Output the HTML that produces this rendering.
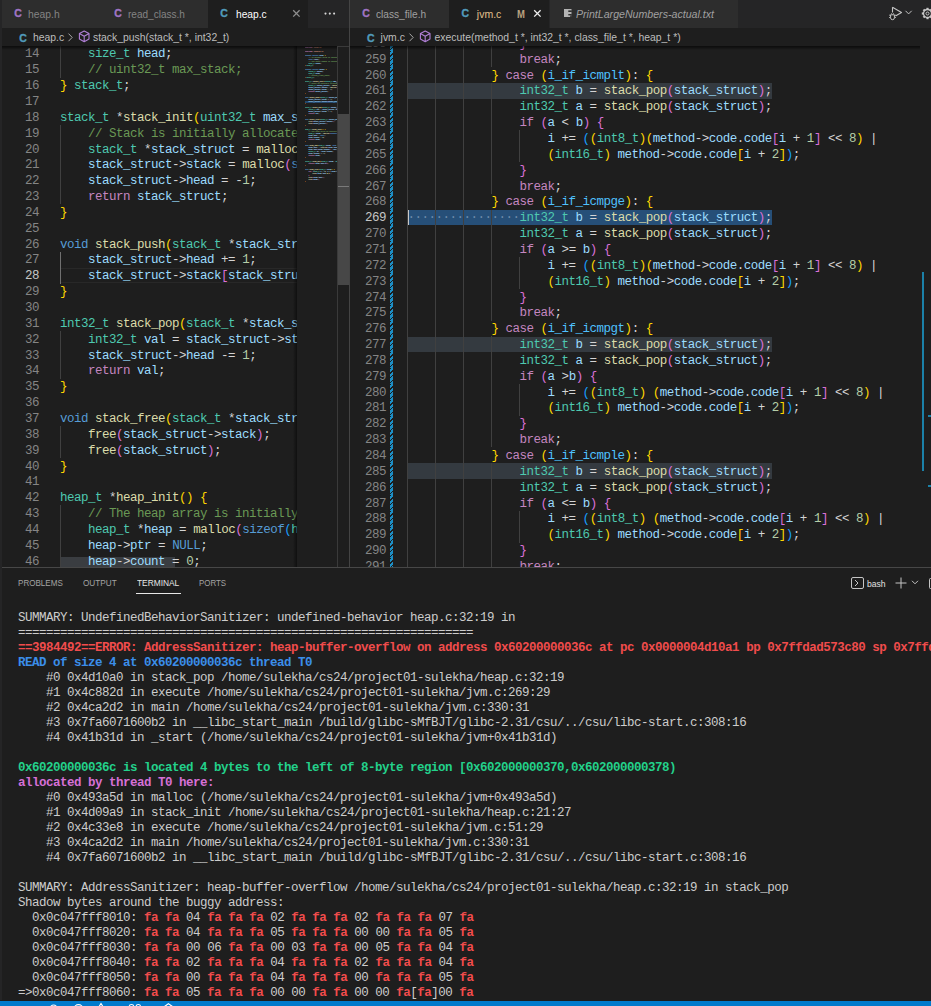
<!DOCTYPE html><html><head><meta charset="utf-8"><style>html,body{margin:0;padding:0;width:931px;height:1006px;overflow:hidden;background:#1e1e1e}
.abs{position:absolute}
.tabbar{background:#252526}
.tabt{font-family:"Liberation Sans",sans-serif;font-size:10.5px;line-height:14px;white-space:pre}
.bct{font-family:"Liberation Sans",sans-serif;font-size:10.4px;line-height:14px;color:#bdbdbd;white-space:pre}
.cic{font-family:"Liberation Sans",sans-serif;font-weight:bold;font-size:10.5px;line-height:10px;-webkit-text-stroke:0.35px currentColor}
.ln{font-family:"Liberation Mono",monospace;font-size:12.5px;letter-spacing:-0.5px;line-height:15.85px;text-align:right;white-space:pre}
.code{font-family:"Liberation Mono",monospace;font-size:12.5px;letter-spacing:-0.5px;line-height:15.85px;white-space:pre;overflow:hidden;color:#d4d4d4}
.term{font-family:"Liberation Mono",monospace;font-size:12.5px;letter-spacing:-0.5px;line-height:15px;white-space:pre;color:#cccccc}
.ptab{font-family:"Liberation Sans",sans-serif;font-size:9.6px;line-height:12px;white-space:pre}
.bash{font-family:"Liberation Sans",sans-serif;font-size:9.5px;line-height:12px;color:#e0e0e0}
.t{color:#4ec9b0}.v{color:#9cdcfe}.f{color:#dcdcaa}.k{color:#c586c0}.s{color:#569cd6}.c{color:#6a9955}.n{color:#b5cea8}.e{color:#4fc1ff}.p{color:#d4d4d4}
.gitm{background:repeating-linear-gradient(-45deg,#1d8fc6 0px,#1d8fc6 2.4px,#1e1e1e 2.4px,#1e1e1e 3.3px)}
.mini{font-family:"Liberation Mono",monospace;font-size:1.667px;line-height:2px;white-space:pre;color:#d4d4d4;overflow:hidden;-webkit-text-stroke:0.12px currentColor;opacity:0.85}
</style></head><body><div class="abs" style="left:0;top:0;width:2px;height:1000px;background:#252526;z-index:5"></div><div class="abs tabbar" style="left:2px;top:0;width:347px;height:28px"></div><div class="abs" style="left:2.0px;top:0;width:99.8px;height:28px;background:#2d2d2d"></div><div class="abs cic" style="left:14.2px;top:7.7px;color:#a074c4">C</div><div class="abs tabt" style="left:28.1px;top:7px;color:#848484;transform:scaleX(0.985);transform-origin:0 0">heap.h</div><div class="abs" style="left:102.0px;top:0;width:106.0px;height:28px;background:#2d2d2d"></div><div class="abs cic" style="left:114.2px;top:7.7px;color:#a074c4">C</div><div class="abs tabt" style="left:128.3px;top:7px;color:#848484;transform:scaleX(0.956);transform-origin:0 0">read_class.h</div><div class="abs" style="left:208.0px;top:0;width:100.0px;height:28px;background:#1e1e1e"></div><div class="abs cic" style="left:220.2px;top:7.7px;color:#519aba">C</div><div class="abs tabt" style="left:236.1px;top:7px;color:#ffffff;transform:scaleX(0.972);transform-origin:0 0">heap.c</div><svg class="abs" style="left:291.5px;top:9.3px" width="9" height="9" viewBox="0 0 9 9"><path d="M1.2 1.2L7.6 7.6M7.6 1.2L1.2 7.6" stroke="#8e8e8e" stroke-width="1.3"/></svg><svg class="abs" style="left:320px;top:8px" width="20" height="12" viewBox="0 0 20 12"><circle cx="5.5" cy="5.6" r="1.05" fill="#d8d8d8"/><circle cx="9.8" cy="5.6" r="1.05" fill="#d8d8d8"/><circle cx="14.1" cy="5.6" r="1.05" fill="#d8d8d8"/></svg><div class="abs" style="left:2px;top:28px;width:347px;height:18px;background:#1e1e1e"></div><div class="abs cic" style="left:19.3px;top:32.5px;color:#519aba">C</div><div class="abs bct" style="left:32.9px;top:31px">heap.c</div><svg class="abs" style="left:67.3px;top:33px" width="7" height="9" viewBox="0 0 7 9"><path d="M1.5 0.6L5.2 4.4L1.5 8.2" fill="none" stroke="#a8a8a8" stroke-width="1"/></svg><svg class="abs" style="left:77.5px;top:30.2px" width="13" height="13" viewBox="0 0 13 13"><path d="M6.2 1L11 3.6V9.1L6.2 11.7L1.4 9.1V3.6Z M1.4 3.6L6.2 6.3L11 3.6 M6.2 6.3V11.7" fill="none" stroke="#b180d7" stroke-width="1.1" stroke-linejoin="round"/></svg><div class="abs bct" style="left:93.0px;top:31px">stack_push(stack_t *, int32_t)</div><div class="abs" style="left:2px;top:46px;width:347px;height:521px;overflow:hidden;background:#1e1e1e"><div class="abs" style="left:58.0px;top:-0.30px;width:1px;height:16.05px;background:#404040"></div><div class="abs ln" style="left:0;top:1.40px;width:37.1px;color:#858585">14</div><div class="abs code" style="left:58.0px;top:1.40px;width:237px">    <span class="t">size_t</span> <span class="v">head</span><span class="p">;</span></div><div class="abs" style="left:58.0px;top:15.55px;width:1px;height:16.05px;background:#404040"></div><div class="abs ln" style="left:0;top:17.25px;width:37.1px;color:#858585">15</div><div class="abs code" style="left:58.0px;top:17.25px;width:237px">    <span class="c">// uint32_t max_stack;</span></div><div class="abs ln" style="left:0;top:33.10px;width:37.1px;color:#858585">16</div><div class="abs code" style="left:58.0px;top:33.10px;width:237px"><span style="color:#ffd700">}</span> <span class="t">stack_t</span><span class="p">;</span></div><div class="abs ln" style="left:0;top:48.95px;width:37.1px;color:#858585">17</div><div class="abs code" style="left:58.0px;top:48.95px;width:237px"></div><div class="abs ln" style="left:0;top:64.80px;width:37.1px;color:#858585">18</div><div class="abs code" style="left:58.0px;top:64.80px;width:237px"><span class="t">stack_t</span> <span class="p">*</span><span class="f">stack_init</span><span style="color:#ffd700">(</span><span class="t">uint32_t</span> <span class="v">max_stack</span><span style="color:#ffd700">)</span> <span style="color:#ffd700">{</span></div><div class="abs" style="left:58.0px;top:78.95px;width:1px;height:16.05px;background:#404040"></div><div class="abs ln" style="left:0;top:80.65px;width:37.1px;color:#858585">19</div><div class="abs code" style="left:58.0px;top:80.65px;width:237px">    <span class="c">// Stack is initially allocated with a fixed size</span></div><div class="abs" style="left:58.0px;top:94.80px;width:1px;height:16.05px;background:#404040"></div><div class="abs ln" style="left:0;top:96.50px;width:37.1px;color:#858585">20</div><div class="abs code" style="left:58.0px;top:96.50px;width:237px">    <span class="t">stack_t</span> <span class="p">*</span><span class="v">stack_struct</span> <span class="p">=</span> <span class="f">malloc</span><span style="color:#da70d6">(</span><span class="s">sizeof</span><span style="color:#179fff">(</span><span class="t">stack_t</span><span style="color:#179fff">)</span><span style="color:#da70d6">)</span><span class="p">;</span></div><div class="abs" style="left:58.0px;top:110.65px;width:1px;height:16.05px;background:#404040"></div><div class="abs ln" style="left:0;top:112.35px;width:37.1px;color:#858585">21</div><div class="abs code" style="left:58.0px;top:112.35px;width:237px">    <span class="v">stack_struct</span><span class="p">-</span><span class="p">&gt;</span><span class="v">stack</span> <span class="p">=</span> <span class="f">malloc</span><span style="color:#da70d6">(</span><span class="s">sizeof</span><span style="color:#179fff">(</span><span class="t">int32_t</span><span style="color:#179fff">)</span> <span class="p">*</span> <span class="v">max_stack</span><span style="color:#da70d6">)</span><span class="p">;</span></div><div class="abs" style="left:58.0px;top:126.50px;width:1px;height:16.05px;background:#404040"></div><div class="abs ln" style="left:0;top:128.20px;width:37.1px;color:#858585">22</div><div class="abs code" style="left:58.0px;top:128.20px;width:237px">    <span class="v">stack_struct</span><span class="p">-</span><span class="p">&gt;</span><span class="v">head</span> <span class="p">=</span> <span class="p">-</span><span class="n">1</span><span class="p">;</span></div><div class="abs" style="left:58.0px;top:142.35px;width:1px;height:16.05px;background:#404040"></div><div class="abs ln" style="left:0;top:144.05px;width:37.1px;color:#858585">23</div><div class="abs code" style="left:58.0px;top:144.05px;width:237px">    <span class="k">return</span> <span class="v">stack_struct</span><span class="p">;</span></div><div class="abs ln" style="left:0;top:159.90px;width:37.1px;color:#858585">24</div><div class="abs code" style="left:58.0px;top:159.90px;width:237px"><span style="color:#ffd700">}</span></div><div class="abs ln" style="left:0;top:175.75px;width:37.1px;color:#858585">25</div><div class="abs code" style="left:58.0px;top:175.75px;width:237px"></div><div class="abs ln" style="left:0;top:191.60px;width:37.1px;color:#858585">26</div><div class="abs code" style="left:58.0px;top:191.60px;width:237px"><span class="s">void</span> <span class="f">stack_push</span><span style="color:#ffd700">(</span><span class="t">stack_t</span> <span class="p">*</span><span class="v">stack_struct</span><span class="p">,</span> <span class="t">int32_t</span> <span class="v">value</span><span style="color:#ffd700">)</span> <span style="color:#ffd700">{</span></div><div class="abs" style="left:58.0px;top:205.75px;width:1px;height:16.05px;background:#707070"></div><div class="abs ln" style="left:0;top:207.45px;width:37.1px;color:#858585">27</div><div class="abs code" style="left:58.0px;top:207.45px;width:237px">    <span class="v">stack_struct</span><span class="p">-</span><span class="p">&gt;</span><span class="v">head</span> <span class="p">+</span><span class="p">=</span> <span class="n">1</span><span class="p">;</span></div><div class="abs" style="left:58.0px;top:221.60px;width:237px;height:15.85px;border-top:1px solid #282828;border-bottom:1px solid #282828;box-sizing:border-box"></div><div class="abs" style="left:58.0px;top:221.60px;width:1px;height:16.05px;background:#707070"></div><div class="abs ln" style="left:0;top:223.30px;width:37.1px;color:#c6c6c6">28</div><div class="abs code" style="left:58.0px;top:223.30px;width:237px">    <span class="v">stack_struct</span><span class="p">-</span><span class="p">&gt;</span><span class="v">stack</span><span style="color:#da70d6">[</span><span class="v">stack_struct</span><span class="p">-</span><span class="p">&gt;</span><span class="v">head</span><span style="color:#da70d6">]</span> <span class="p">=</span> <span class="v">value</span><span class="p">;</span></div><div class="abs ln" style="left:0;top:239.15px;width:37.1px;color:#858585">29</div><div class="abs code" style="left:58.0px;top:239.15px;width:237px"><span style="color:#ffd700">}</span></div><div class="abs ln" style="left:0;top:255.00px;width:37.1px;color:#858585">30</div><div class="abs code" style="left:58.0px;top:255.00px;width:237px"></div><div class="abs ln" style="left:0;top:270.85px;width:37.1px;color:#858585">31</div><div class="abs code" style="left:58.0px;top:270.85px;width:237px"><span class="t">int32_t</span> <span class="f">stack_pop</span><span style="color:#ffd700">(</span><span class="t">stack_t</span> <span class="p">*</span><span class="v">stack_struct</span><span style="color:#ffd700">)</span> <span style="color:#ffd700">{</span></div><div class="abs" style="left:58.0px;top:285.00px;width:1px;height:16.05px;background:#404040"></div><div class="abs ln" style="left:0;top:286.70px;width:37.1px;color:#858585">32</div><div class="abs code" style="left:58.0px;top:286.70px;width:237px">    <span class="t">int32_t</span> <span class="v">val</span> <span class="p">=</span> <span class="v">stack_struct</span><span class="p">-</span><span class="p">&gt;</span><span class="v">stack</span><span style="color:#da70d6">[</span><span class="v">stack_struct</span><span class="p">-</span><span class="p">&gt;</span><span class="v">head</span><span style="color:#da70d6">]</span><span class="p">;</span></div><div class="abs" style="left:58.0px;top:300.85px;width:1px;height:16.05px;background:#404040"></div><div class="abs ln" style="left:0;top:302.55px;width:37.1px;color:#858585">33</div><div class="abs code" style="left:58.0px;top:302.55px;width:237px">    <span class="v">stack_struct</span><span class="p">-</span><span class="p">&gt;</span><span class="v">head</span> <span class="p">-</span><span class="p">=</span> <span class="n">1</span><span class="p">;</span></div><div class="abs" style="left:58.0px;top:316.70px;width:1px;height:16.05px;background:#404040"></div><div class="abs ln" style="left:0;top:318.40px;width:37.1px;color:#858585">34</div><div class="abs code" style="left:58.0px;top:318.40px;width:237px">    <span class="k">return</span> <span class="v">val</span><span class="p">;</span></div><div class="abs ln" style="left:0;top:334.25px;width:37.1px;color:#858585">35</div><div class="abs code" style="left:58.0px;top:334.25px;width:237px"><span style="color:#ffd700">}</span></div><div class="abs ln" style="left:0;top:350.10px;width:37.1px;color:#858585">36</div><div class="abs code" style="left:58.0px;top:350.10px;width:237px"></div><div class="abs ln" style="left:0;top:365.95px;width:37.1px;color:#858585">37</div><div class="abs code" style="left:58.0px;top:365.95px;width:237px"><span class="s">void</span> <span class="f">stack_free</span><span style="color:#ffd700">(</span><span class="t">stack_t</span> <span class="p">*</span><span class="v">stack_struct</span><span style="color:#ffd700">)</span> <span style="color:#ffd700">{</span></div><div class="abs" style="left:58.0px;top:380.10px;width:1px;height:16.05px;background:#404040"></div><div class="abs ln" style="left:0;top:381.80px;width:37.1px;color:#858585">38</div><div class="abs code" style="left:58.0px;top:381.80px;width:237px">    <span class="f">free</span><span style="color:#da70d6">(</span><span class="v">stack_struct</span><span class="p">-</span><span class="p">&gt;</span><span class="v">stack</span><span style="color:#da70d6">)</span><span class="p">;</span></div><div class="abs" style="left:58.0px;top:395.95px;width:1px;height:16.05px;background:#404040"></div><div class="abs ln" style="left:0;top:397.65px;width:37.1px;color:#858585">39</div><div class="abs code" style="left:58.0px;top:397.65px;width:237px">    <span class="f">free</span><span style="color:#da70d6">(</span><span class="v">stack_struct</span><span style="color:#da70d6">)</span><span class="p">;</span></div><div class="abs ln" style="left:0;top:413.50px;width:37.1px;color:#858585">40</div><div class="abs code" style="left:58.0px;top:413.50px;width:237px"><span style="color:#ffd700">}</span></div><div class="abs ln" style="left:0;top:429.35px;width:37.1px;color:#858585">41</div><div class="abs code" style="left:58.0px;top:429.35px;width:237px"></div><div class="abs ln" style="left:0;top:445.20px;width:37.1px;color:#858585">42</div><div class="abs code" style="left:58.0px;top:445.20px;width:237px"><span class="t">heap_t</span> <span class="p">*</span><span class="f">heap_init</span><span style="color:#ffd700">(</span><span style="color:#ffd700">)</span> <span style="color:#ffd700">{</span></div><div class="abs" style="left:58.0px;top:459.35px;width:1px;height:16.05px;background:#404040"></div><div class="abs ln" style="left:0;top:461.05px;width:37.1px;color:#858585">43</div><div class="abs code" style="left:58.0px;top:461.05px;width:237px">    <span class="c">// The heap array is initially empty</span></div><div class="abs" style="left:58.0px;top:475.20px;width:1px;height:16.05px;background:#404040"></div><div class="abs ln" style="left:0;top:476.90px;width:37.1px;color:#858585">44</div><div class="abs code" style="left:58.0px;top:476.90px;width:237px">    <span class="t">heap_t</span> <span class="p">*</span><span class="v">heap</span> <span class="p">=</span> <span class="f">malloc</span><span style="color:#da70d6">(</span><span class="s">sizeof</span><span style="color:#179fff">(</span><span class="t">heap_t</span><span style="color:#179fff">)</span><span style="color:#da70d6">)</span><span class="p">;</span></div><div class="abs" style="left:58.0px;top:491.05px;width:1px;height:16.05px;background:#404040"></div><div class="abs ln" style="left:0;top:492.75px;width:37.1px;color:#858585">45</div><div class="abs code" style="left:58.0px;top:492.75px;width:237px">    <span class="v">heap</span><span class="p">-</span><span class="p">&gt;</span><span class="v">ptr</span> <span class="p">=</span> <span class="s">NULL</span><span class="p">;</span></div><div class="abs" style="left:58.0px;top:510.90px;width:114.5px;height:15.85px;background:#3a3d41"></div><div class="abs" style="left:58.0px;top:506.90px;width:1px;height:16.05px;background:#404040"></div><div class="abs ln" style="left:0;top:508.60px;width:37.1px;color:#858585">46</div><div class="abs code" style="left:58.0px;top:508.60px;width:237px">    <span class="v">heap</span><span class="p">-</span><span class="p">&gt;</span><span class="v">count</span> <span class="p">=</span> <span class="n">0</span><span class="p">;</span></div><div class="abs" style="left:58.0px;top:522.75px;width:1px;height:16.05px;background:#404040"></div><div class="abs ln" style="left:0;top:524.45px;width:37.1px;color:#858585">47</div><div class="abs code" style="left:58.0px;top:524.45px;width:237px">    <span class="k">return</span> <span class="v">heap</span><span class="p">;</span></div><div class="abs" style="left:295px;top:0px;width:40px;height:521px;overflow:hidden"><div class="abs mini" style="left:7.5px;top:1px;width:33px"><div style="height:2px;"><span style="color:#c586c0">#include</span> <span style="color:#ce9178">&quot;heap.h&quot;</span></div><div style="height:2px;"></div><div style="height:2px;"><span style="color:#c586c0">#include</span> <span style="color:#ce9178">&quot;stdlib.h&quot;</span></div><div style="height:2px;"></div><div style="height:2px;"><span class="s">typedef</span> <span class="s">struct</span> <span class="v">heap</span> <span style="color:#ffd700">{</span></div><div style="height:2px;">    <span class="c">// An dynamic array of pointers to free</span></div><div style="height:2px;">    <span class="s">void</span> <span class="p">*</span><span class="p">*</span><span class="v">ptr</span><span class="p">;</span></div><div style="height:2px;">    <span class="c">// The total number of pointers there are</span></div><div style="height:2px;">    <span class="t">size_t</span> <span class="v">count</span><span class="p">;</span></div><div style="height:2px;"><span style="color:#ffd700">}</span> <span class="t">heap_t</span><span class="p">;</span></div><div style="height:2px;"></div><div style="height:2px;"><span class="s">typedef</span> <span class="s">struct</span> <span class="v">stack</span> <span style="color:#ffd700">{</span></div><div style="height:2px;">    <span class="t">int32_t</span> <span class="p">*</span><span class="v">stack</span><span class="p">;</span></div><div style="height:2px;">    <span class="t">size_t</span> <span class="v">head</span><span class="p">;</span></div><div style="height:2px;">    <span class="c">// uint32_t max_stack;</span></div><div style="height:2px;"><span style="color:#ffd700">}</span> <span class="t">stack_t</span><span class="p">;</span></div><div style="height:2px;"></div><div style="height:2px;"><span class="t">stack_t</span> <span class="p">*</span><span class="f">stack_init</span><span style="color:#ffd700">(</span><span class="t">uint32_t</span> <span class="v">max_stack</span><span style="color:#ffd700">)</span> <span style="color:#ffd700">{</span></div><div style="height:2px;">    <span class="c">// Stack is initially allocated with a fixed size</span></div><div style="height:2px;">    <span class="t">stack_t</span> <span class="p">*</span><span class="v">stack_struct</span> <span class="p">=</span> <span class="f">malloc</span><span style="color:#da70d6">(</span><span class="s">sizeof</span><span style="color:#179fff">(</span><span class="t">stack_t</span><span style="color:#179fff">)</span><span style="color:#da70d6">)</span><span class="p">;</span></div><div style="height:2px;">    <span class="v">stack_struct</span><span class="p">-</span><span class="p">&gt;</span><span class="v">stack</span> <span class="p">=</span> <span class="f">malloc</span><span style="color:#da70d6">(</span><span class="s">sizeof</span><span style="color:#179fff">(</span><span class="t">int32_t</span><span style="color:#179fff">)</span> <span class="p">*</span> <span class="v">max_stack</span><span style="color:#da70d6">)</span><span class="p">;</span></div><div style="height:2px;">    <span class="v">stack_struct</span><span class="p">-</span><span class="p">&gt;</span><span class="v">head</span> <span class="p">=</span> <span class="p">-</span><span class="n">1</span><span class="p">;</span></div><div style="height:2px;">    <span class="k">return</span> <span class="v">stack_struct</span><span class="p">;</span></div><div style="height:2px;"><span style="color:#ffd700">}</span></div><div style="height:2px;"></div><div style="height:2px;"><span class="s">void</span> <span class="f">stack_push</span><span style="color:#ffd700">(</span><span class="t">stack_t</span> <span class="p">*</span><span class="v">stack_struct</span><span class="p">,</span> <span class="t">int32_t</span> <span class="v">value</span><span style="color:#ffd700">)</span> <span style="color:#ffd700">{</span></div><div style="height:2px;">    <span class="v">stack_struct</span><span class="p">-</span><span class="p">&gt;</span><span class="v">head</span> <span class="p">+</span><span class="p">=</span> <span class="n">1</span><span class="p">;</span></div><div style="height:2px;background:#264f78;">    <span class="v">stack_struct</span><span class="p">-</span><span class="p">&gt;</span><span class="v">stack</span><span style="color:#da70d6">[</span><span class="v">stack_struct</span><span class="p">-</span><span class="p">&gt;</span><span class="v">head</span><span style="color:#da70d6">]</span> <span class="p">=</span> <span class="v">value</span><span class="p">;</span></div><div style="height:2px;"><span style="color:#ffd700">}</span></div><div style="height:2px;"></div><div style="height:2px;"><span class="t">int32_t</span> <span class="f">stack_pop</span><span style="color:#ffd700">(</span><span class="t">stack_t</span> <span class="p">*</span><span class="v">stack_struct</span><span style="color:#ffd700">)</span> <span style="color:#ffd700">{</span></div><div style="height:2px;">    <span class="t">int32_t</span> <span class="v">val</span> <span class="p">=</span> <span class="v">stack_struct</span><span class="p">-</span><span class="p">&gt;</span><span class="v">stack</span><span style="color:#da70d6">[</span><span class="v">stack_struct</span><span class="p">-</span><span class="p">&gt;</span><span class="v">head</span><span style="color:#da70d6">]</span><span class="p">;</span></div><div style="height:2px;">    <span class="v">stack_struct</span><span class="p">-</span><span class="p">&gt;</span><span class="v">head</span> <span class="p">-</span><span class="p">=</span> <span class="n">1</span><span class="p">;</span></div><div style="height:2px;">    <span class="k">return</span> <span class="v">val</span><span class="p">;</span></div><div style="height:2px;"><span style="color:#ffd700">}</span></div><div style="height:2px;"></div><div style="height:2px;"><span class="s">void</span> <span class="f">stack_free</span><span style="color:#ffd700">(</span><span class="t">stack_t</span> <span class="p">*</span><span class="v">stack_struct</span><span style="color:#ffd700">)</span> <span style="color:#ffd700">{</span></div><div style="height:2px;">    <span class="f">free</span><span style="color:#da70d6">(</span><span class="v">stack_struct</span><span class="p">-</span><span class="p">&gt;</span><span class="v">stack</span><span style="color:#da70d6">)</span><span class="p">;</span></div><div style="height:2px;">    <span class="f">free</span><span style="color:#da70d6">(</span><span class="v">stack_struct</span><span style="color:#da70d6">)</span><span class="p">;</span></div><div style="height:2px;"><span style="color:#ffd700">}</span></div><div style="height:2px;"></div><div style="height:2px;"><span class="t">heap_t</span> <span class="p">*</span><span class="f">heap_init</span><span style="color:#ffd700">(</span><span style="color:#ffd700">)</span> <span style="color:#ffd700">{</span></div><div style="height:2px;">    <span class="c">// The heap array is initially empty</span></div><div style="height:2px;">    <span class="t">heap_t</span> <span class="p">*</span><span class="v">heap</span> <span class="p">=</span> <span class="f">malloc</span><span style="color:#da70d6">(</span><span class="s">sizeof</span><span style="color:#179fff">(</span><span class="t">heap_t</span><span style="color:#179fff">)</span><span style="color:#da70d6">)</span><span class="p">;</span></div><div style="height:2px;">    <span class="v">heap</span><span class="p">-</span><span class="p">&gt;</span><span class="v">ptr</span> <span class="p">=</span> <span class="s">NULL</span><span class="p">;</span></div><div style="height:2px;">    <span class="v">heap</span><span class="p">-</span><span class="p">&gt;</span><span class="v">count</span> <span class="p">=</span> <span class="n">0</span><span class="p">;</span></div><div style="height:2px;">    <span class="k">return</span> <span class="v">heap</span><span class="p">;</span></div><div style="height:2px;"><span style="color:#ffd700">}</span></div><div style="height:2px;"></div><div style="height:2px;"><span class="s">void</span> <span class="f">heap_add</span><span style="color:#ffd700">(</span><span class="t">heap_t</span> <span class="p">*</span><span class="v">heap</span><span class="p">,</span> <span class="s">void</span> <span class="p">*</span><span class="v">ptr</span><span style="color:#ffd700">)</span> <span style="color:#ffd700">{</span></div><div style="height:2px;">    <span class="v">heap</span><span class="p">-</span><span class="p">&gt;</span><span class="v">ptr</span> <span class="p">=</span> <span class="f">realloc</span><span style="color:#da70d6">(</span><span class="v">heap</span><span class="p">-</span><span class="p">&gt;</span><span class="v">ptr</span><span class="p">,</span> <span class="s">sizeof</span><span style="color:#179fff">(</span><span class="s">void</span> <span class="p">*</span><span style="color:#179fff">)</span> <span class="p">*</span> <span style="color:#179fff">(</span><span class="v">heap</span><span class="p">-</span><span class="p">&gt;</span><span class="v">count</span> <span class="p">+</span> <span class="n">1</span><span style="color:#179fff">)</span><span style="color:#da70d6">)</span><span class="p">;</span></div><div style="height:2px;">    <span class="v">heap</span><span class="p">-</span><span class="p">&gt;</span><span class="v">ptr</span><span style="color:#da70d6">[</span><span class="v">heap</span><span class="p">-</span><span class="p">&gt;</span><span class="v">count</span><span style="color:#da70d6">]</span> <span class="p">=</span> <span class="v">ptr</span><span class="p">;</span></div><div style="height:2px;">    <span class="t">stack_t</span> <span class="p">*</span><span class="v">s</span> <span class="p">=</span> <span class="v">heap</span><span class="p">-</span><span class="p">&gt;</span><span class="v">count</span><span class="p">;</span></div><div style="height:2px;">    <span class="v">heap</span><span class="p">-</span><span class="p">&gt;</span><span class="v">count</span> <span class="p">+</span><span class="p">=</span> <span class="n">1</span><span class="p">;</span></div><div style="height:2px;">    <span class="k">return</span> <span class="v">heap</span><span class="p">;</span></div><div style="height:2px;"><span style="color:#ffd700">}</span></div><div style="height:2px;"></div><div style="height:2px;"><span class="t">int32_t</span> <span class="f">heap_get</span><span style="color:#ffd700">(</span><span class="t">heap_t</span> <span class="p">*</span><span class="v">heap</span><span class="p">,</span> <span class="t">int32_t</span> <span class="v">i</span><span style="color:#ffd700">)</span> <span style="color:#ffd700">{</span></div><div style="height:2px;">    <span class="k">return</span> <span class="v">heap</span><span class="p">-</span><span class="p">&gt;</span><span class="v">ptr</span><span style="color:#da70d6">[</span><span class="v">i</span><span style="color:#da70d6">]</span><span class="p">;</span></div><div style="height:2px;"><span style="color:#ffd700">}</span></div><div style="height:2px;"></div><div style="height:2px;"><span class="s">void</span> <span class="f">heap_free</span><span style="color:#ffd700">(</span><span class="t">heap_t</span> <span class="p">*</span><span class="v">heap</span><span style="color:#ffd700">)</span> <span style="color:#ffd700">{</span></div><div style="height:2px;">    <span class="k">for</span> <span style="color:#da70d6">(</span><span class="t">size_t</span> <span class="v">i</span> <span class="p">=</span> <span class="n">0</span><span class="p">;</span> <span class="v">i</span> <span class="p">&lt;</span> <span class="v">heap</span><span class="p">-</span><span class="p">&gt;</span><span class="v">count</span><span class="p">;</span> <span class="v">i</span><span class="p">+</span><span class="p">+</span><span style="color:#da70d6">)</span> <span style="color:#da70d6">{</span></div><div style="height:2px;">        <span class="f">free</span><span style="color:#179fff">(</span><span class="v">heap</span><span class="p">-</span><span class="p">&gt;</span><span class="v">ptr</span><span style="color:#ffd700">[</span><span class="v">i</span><span style="color:#ffd700">]</span><span style="color:#179fff">)</span><span class="p">;</span></div><div style="height:2px;">    <span style="color:#da70d6">}</span></div><div style="height:2px;">    <span class="f">free</span><span style="color:#da70d6">(</span><span class="v">heap</span><span class="p">-</span><span class="p">&gt;</span><span class="v">ptr</span><span style="color:#da70d6">)</span><span class="p">;</span></div><div style="height:2px;">    <span class="f">free</span><span style="color:#da70d6">(</span><span class="v">heap</span><span style="color:#da70d6">)</span><span class="p">;</span></div><div style="height:2px;"><span style="color:#ffd700">}</span></div></div></div><div class="abs" style="left:291px;top:0;width:4px;height:521px;background:linear-gradient(to right,rgba(0,0,0,0),rgba(0,0,0,0.5))"></div><div class="abs" style="left:335px;top:0;width:1px;height:521px;background:#3a3a3a"></div><div class="abs" style="left:335px;top:0;width:12px;height:1px;background:#3a3a3a"></div><div class="abs" style="left:336px;top:67.5px;width:11px;height:171.5px;background:#474747"></div><div class="abs" style="left:336px;top:140.0px;width:11px;height:1px;background:#7a7a7a"></div><div class="abs" style="left:0;top:0;width:335px;height:4px;background:linear-gradient(#000000a0,#00000000)"></div></div><div class="abs" style="left:349px;top:0;width:1px;height:567px;background:#444444"></div><div class="abs tabbar" style="left:350px;top:0;width:581px;height:28px"></div><div class="abs" style="left:350.0px;top:0;width:99.3px;height:28px;background:#2d2d2d"></div><div class="abs cic" style="left:362.2px;top:7.7px;color:#a074c4">C</div><div class="abs tabt" style="left:375.6px;top:7px;color:#a0a0a0;transform:scaleX(0.965);transform-origin:0 0">class_file.h</div><div class="abs" style="left:449.3px;top:0;width:99.7px;height:28px;background:#1e1e1e"></div><div class="abs cic" style="left:461.5px;top:7.7px;color:#519aba">C</div><div class="abs tabt" style="left:476.8px;top:7px;color:#e2c08d;transform:scaleX(1.000);transform-origin:0 0">jvm.c</div><div class="abs tabt" style="left:516.6px;top:7px;color:#b9a27e;font-weight:bold;font-size:10px;top:8.2px;transform:scaleX(0.95);transform-origin:0 0">M</div><svg class="abs" style="left:532.5px;top:9.3px" width="9" height="9" viewBox="0 0 9 9"><path d="M1.2 1.2L7.6 7.6M7.6 1.2L1.2 7.6" stroke="#f0f0f0" stroke-width="1.3"/></svg><div class="abs" style="left:549.5px;top:0;width:188.7px;height:28px;background:#2d2d2d"></div><svg class="abs" style="left:563.6px;top:9.0px" width="9" height="10" viewBox="0 0 9 10"><rect x="0" y="0" width="7.5" height="8" fill="#b4b4b4"/><rect x="4.3" y="1.4" width="3.5" height="1.6" fill="#2d2d2d"/><rect x="4.3" y="5" width="3.5" height="1.4" fill="#2d2d2d"/><rect x="6.2" y="6.4" width="1.6" height="1.6" fill="#2d2d2d"/></svg><div class="abs tabt" style="left:576.4px;top:7px;color:#a0a0a0;font-style:italic;transform:scaleX(1.010);transform-origin:0 0">PrintLargeNumbers-actual.txt</div><svg class="abs" style="left:880px;top:0px" width="51" height="28" viewBox="0 0 51 28"><path d="M12.5 7.2L21.5 12.5L15.5 16" fill="none" stroke="#c5c5c5" stroke-width="1.1" stroke-linejoin="round"/><path d="M12.5 7.2V12.5" fill="none" stroke="#c5c5c5" stroke-width="1.1"/><path d="M10.6 14.8h3.8a0 0 0 0 1 0 0v3a1.9 1.9 0 0 1-3.8 0v-3z" fill="#1e1e1e" stroke="#c5c5c5" stroke-width="1"/><path d="M9 15.2h1.4M9 17.5h1.4M14.6 15.2h1.4M14.6 17.5h1.4M11.3 13.2l0.8 1M13.7 13.2l-0.8 1" stroke="#c5c5c5" stroke-width="0.8"/><path d="M25.5 10.8L28.6 13.9L31.7 10.8" fill="none" stroke="#c5c5c5" stroke-width="1"/><circle cx="47.5" cy="13.5" r="4" fill="none" stroke="#c5c5c5" stroke-width="1.3"/><circle cx="47.5" cy="13.5" r="1.5" fill="none" stroke="#c5c5c5" stroke-width="1"/><rect x="51.00" y="12.40" width="2.2" height="2.2" transform="rotate(0 52.10 13.50)" fill="#c5c5c5"/><rect x="49.65" y="15.65" width="2.2" height="2.2" transform="rotate(45 50.75 16.75)" fill="#c5c5c5"/><rect x="46.40" y="17.00" width="2.2" height="2.2" transform="rotate(90 47.50 18.10)" fill="#c5c5c5"/><rect x="43.15" y="15.65" width="2.2" height="2.2" transform="rotate(135 44.25 16.75)" fill="#c5c5c5"/><rect x="41.80" y="12.40" width="2.2" height="2.2" transform="rotate(180 42.90 13.50)" fill="#c5c5c5"/><rect x="43.15" y="9.15" width="2.2" height="2.2" transform="rotate(225 44.25 10.25)" fill="#c5c5c5"/><rect x="46.40" y="7.80" width="2.2" height="2.2" transform="rotate(270 47.50 8.90)" fill="#c5c5c5"/><rect x="49.65" y="9.15" width="2.2" height="2.2" transform="rotate(315 50.75 10.25)" fill="#c5c5c5"/></svg><div class="abs" style="left:350px;top:28px;width:581px;height:18px;background:#1e1e1e"></div><div class="abs cic" style="left:367.0px;top:32.5px;color:#519aba">C</div><div class="abs bct" style="left:380.6px;top:31px">jvm.c</div><svg class="abs" style="left:408.0px;top:33px" width="7" height="9" viewBox="0 0 7 9"><path d="M1.5 0.6L5.2 4.4L1.5 8.2" fill="none" stroke="#a8a8a8" stroke-width="1"/></svg><svg class="abs" style="left:418.6px;top:30.2px" width="13" height="13" viewBox="0 0 13 13"><path d="M6.2 1L11 3.6V9.1L6.2 11.7L1.4 9.1V3.6Z M1.4 3.6L6.2 6.3L11 3.6 M6.2 6.3V11.7" fill="none" stroke="#b180d7" stroke-width="1.1" stroke-linejoin="round"/></svg><div class="abs bct" style="left:434.6px;top:31px">execute(method_t *, int32_t *, class_file_t *, heap_t *)</div><div class="abs" style="left:350px;top:46px;width:581px;height:521px;overflow:hidden;background:#1e1e1e"><div class="abs" style="left:57.0px;top:-10.80px;width:1px;height:16.05px;background:#404040"></div><div class="abs" style="left:85.0px;top:-10.80px;width:1px;height:16.05px;background:#404040"></div><div class="abs" style="left:113.0px;top:-10.80px;width:1px;height:16.05px;background:#404040"></div><div class="abs" style="left:141.0px;top:-10.80px;width:1px;height:16.05px;background:#404040"></div><div class="abs ln" style="left:0;top:-9.10px;width:35.9px;color:#858585">258</div><div class="abs code" style="left:57.5px;top:-9.10px">                <span style="color:#da70d6">}</span></div><div class="abs gitm" style="left:40.0px;top:-10.80px;width:3px;height:16.05px"></div><div class="abs" style="left:57.0px;top:5.05px;width:1px;height:16.05px;background:#404040"></div><div class="abs" style="left:85.0px;top:5.05px;width:1px;height:16.05px;background:#404040"></div><div class="abs" style="left:113.0px;top:5.05px;width:1px;height:16.05px;background:#404040"></div><div class="abs" style="left:141.0px;top:5.05px;width:1px;height:16.05px;background:#404040"></div><div class="abs ln" style="left:0;top:6.75px;width:35.9px;color:#858585">259</div><div class="abs code" style="left:57.5px;top:6.75px">                <span class="k">break</span><span class="p">;</span></div><div class="abs gitm" style="left:40.0px;top:5.05px;width:3px;height:16.05px"></div><div class="abs" style="left:57.0px;top:20.90px;width:1px;height:16.05px;background:#404040"></div><div class="abs" style="left:85.0px;top:20.90px;width:1px;height:16.05px;background:#404040"></div><div class="abs" style="left:113.0px;top:20.90px;width:1px;height:16.05px;background:#404040"></div><div class="abs ln" style="left:0;top:22.60px;width:35.9px;color:#858585">260</div><div class="abs code" style="left:57.5px;top:22.60px">            <span style="color:#ffd700">}</span> <span class="k">case</span> <span style="color:#ffd700">(</span><span class="e">i_if_icmplt</span><span style="color:#ffd700">)</span><span class="p">:</span> <span style="color:#ffd700">{</span></div><div class="abs gitm" style="left:40.0px;top:20.90px;width:3px;height:16.05px"></div><div class="abs" style="left:57.5px;top:36.95px;width:364.0px;height:15.65px;background:#343a40"></div><div class="abs" style="left:57.0px;top:36.75px;width:1px;height:16.05px;background:#404040"></div><div class="abs" style="left:85.0px;top:36.75px;width:1px;height:16.05px;background:#404040"></div><div class="abs" style="left:113.0px;top:36.75px;width:1px;height:16.05px;background:#404040"></div><div class="abs" style="left:141.0px;top:36.75px;width:1px;height:16.05px;background:#404040"></div><div class="abs ln" style="left:0;top:38.45px;width:35.9px;color:#858585">261</div><div class="abs code" style="left:57.5px;top:38.45px">                <span class="t">int32_t</span> <span class="v">b</span> <span class="p">=</span> <span class="f">stack_pop</span><span style="color:#da70d6">(</span><span class="v">stack_struct</span><span style="color:#da70d6">)</span><span class="p">;</span></div><div class="abs gitm" style="left:40.0px;top:36.75px;width:3px;height:16.05px"></div><div class="abs" style="left:57.0px;top:52.60px;width:1px;height:16.05px;background:#404040"></div><div class="abs" style="left:85.0px;top:52.60px;width:1px;height:16.05px;background:#404040"></div><div class="abs" style="left:113.0px;top:52.60px;width:1px;height:16.05px;background:#404040"></div><div class="abs" style="left:141.0px;top:52.60px;width:1px;height:16.05px;background:#404040"></div><div class="abs ln" style="left:0;top:54.30px;width:35.9px;color:#858585">262</div><div class="abs code" style="left:57.5px;top:54.30px">                <span class="t">int32_t</span> <span class="v">a</span> <span class="p">=</span> <span class="f">stack_pop</span><span style="color:#da70d6">(</span><span class="v">stack_struct</span><span style="color:#da70d6">)</span><span class="p">;</span></div><div class="abs gitm" style="left:40.0px;top:52.60px;width:3px;height:16.05px"></div><div class="abs" style="left:57.0px;top:68.45px;width:1px;height:16.05px;background:#404040"></div><div class="abs" style="left:85.0px;top:68.45px;width:1px;height:16.05px;background:#404040"></div><div class="abs" style="left:113.0px;top:68.45px;width:1px;height:16.05px;background:#404040"></div><div class="abs" style="left:141.0px;top:68.45px;width:1px;height:16.05px;background:#404040"></div><div class="abs ln" style="left:0;top:70.15px;width:35.9px;color:#858585">263</div><div class="abs code" style="left:57.5px;top:70.15px">                <span class="k">if</span> <span style="color:#da70d6">(</span><span class="v">a</span> <span class="p">&lt;</span> <span class="v">b</span><span style="color:#da70d6">)</span> <span style="color:#da70d6">{</span></div><div class="abs gitm" style="left:40.0px;top:68.45px;width:3px;height:16.05px"></div><div class="abs" style="left:57.0px;top:84.30px;width:1px;height:16.05px;background:#404040"></div><div class="abs" style="left:85.0px;top:84.30px;width:1px;height:16.05px;background:#404040"></div><div class="abs" style="left:113.0px;top:84.30px;width:1px;height:16.05px;background:#404040"></div><div class="abs" style="left:141.0px;top:84.30px;width:1px;height:16.05px;background:#404040"></div><div class="abs" style="left:169.0px;top:84.30px;width:1px;height:16.05px;background:#404040"></div><div class="abs ln" style="left:0;top:86.00px;width:35.9px;color:#858585">264</div><div class="abs code" style="left:57.5px;top:86.00px">                    <span class="v">i</span> <span class="p">+</span><span class="p">=</span> <span style="color:#179fff">(</span><span style="color:#ffd700">(</span><span class="t">int8_t</span><span style="color:#ffd700">)</span><span style="color:#ffd700">(</span><span class="v">method</span><span class="p">-</span><span class="p">&gt;</span><span class="v">code</span><span class="p">.</span><span class="v">code</span><span style="color:#da70d6">[</span><span class="v">i</span> <span class="p">+</span> <span class="n">1</span><span style="color:#da70d6">]</span> <span class="p">&lt;</span><span class="p">&lt;</span> <span class="n">8</span><span style="color:#ffd700">)</span> <span class="p">|</span></div><div class="abs gitm" style="left:40.0px;top:84.30px;width:3px;height:16.05px"></div><div class="abs" style="left:57.0px;top:100.15px;width:1px;height:16.05px;background:#404040"></div><div class="abs" style="left:85.0px;top:100.15px;width:1px;height:16.05px;background:#404040"></div><div class="abs" style="left:113.0px;top:100.15px;width:1px;height:16.05px;background:#404040"></div><div class="abs" style="left:141.0px;top:100.15px;width:1px;height:16.05px;background:#404040"></div><div class="abs" style="left:169.0px;top:100.15px;width:1px;height:16.05px;background:#404040"></div><div class="abs ln" style="left:0;top:101.85px;width:35.9px;color:#858585">265</div><div class="abs code" style="left:57.5px;top:101.85px">                    <span style="color:#ffd700">(</span><span class="t">int16_t</span><span style="color:#ffd700">)</span> <span class="v">method</span><span class="p">-</span><span class="p">&gt;</span><span class="v">code</span><span class="p">.</span><span class="v">code</span><span style="color:#ffd700">[</span><span class="v">i</span> <span class="p">+</span> <span class="n">2</span><span style="color:#ffd700">]</span><span style="color:#179fff">)</span><span class="p">;</span></div><div class="abs gitm" style="left:40.0px;top:100.15px;width:3px;height:16.05px"></div><div class="abs" style="left:57.0px;top:116.00px;width:1px;height:16.05px;background:#404040"></div><div class="abs" style="left:85.0px;top:116.00px;width:1px;height:16.05px;background:#404040"></div><div class="abs" style="left:113.0px;top:116.00px;width:1px;height:16.05px;background:#404040"></div><div class="abs" style="left:141.0px;top:116.00px;width:1px;height:16.05px;background:#404040"></div><div class="abs ln" style="left:0;top:117.70px;width:35.9px;color:#858585">266</div><div class="abs code" style="left:57.5px;top:117.70px">                <span style="color:#da70d6">}</span></div><div class="abs gitm" style="left:40.0px;top:116.00px;width:3px;height:16.05px"></div><div class="abs" style="left:57.0px;top:131.85px;width:1px;height:16.05px;background:#404040"></div><div class="abs" style="left:85.0px;top:131.85px;width:1px;height:16.05px;background:#404040"></div><div class="abs" style="left:113.0px;top:131.85px;width:1px;height:16.05px;background:#404040"></div><div class="abs" style="left:141.0px;top:131.85px;width:1px;height:16.05px;background:#404040"></div><div class="abs ln" style="left:0;top:133.55px;width:35.9px;color:#858585">267</div><div class="abs code" style="left:57.5px;top:133.55px">                <span class="k">break</span><span class="p">;</span></div><div class="abs gitm" style="left:40.0px;top:131.85px;width:3px;height:16.05px"></div><div class="abs" style="left:57.0px;top:147.70px;width:1px;height:16.05px;background:#404040"></div><div class="abs" style="left:85.0px;top:147.70px;width:1px;height:16.05px;background:#404040"></div><div class="abs" style="left:113.0px;top:147.70px;width:1px;height:16.05px;background:#404040"></div><div class="abs ln" style="left:0;top:149.40px;width:35.9px;color:#858585">268</div><div class="abs code" style="left:57.5px;top:149.40px">            <span style="color:#ffd700">}</span> <span class="k">case</span> <span style="color:#ffd700">(</span><span class="e">i_if_icmpge</span><span style="color:#ffd700">)</span><span class="p">:</span> <span style="color:#ffd700">{</span></div><div class="abs gitm" style="left:40.0px;top:147.70px;width:3px;height:16.05px"></div><div class="abs" style="left:57.5px;top:163.75px;width:364.0px;height:15.65px;background:#264f78"></div><div class="abs" style="left:57.0px;top:163.55px;width:1px;height:16.05px;background:#404040"></div><div class="abs" style="left:85.0px;top:163.55px;width:1px;height:16.05px;background:#404040"></div><div class="abs" style="left:113.0px;top:163.55px;width:1px;height:16.05px;background:#404040"></div><div class="abs" style="left:141.0px;top:163.55px;width:1px;height:16.05px;background:#404040"></div><div class="abs code" style="left:57.5px;top:165.25px;color:#6d8aa8">&middot;&middot;&middot;&middot;&middot;&middot;&middot;&middot;&middot;&middot;&middot;&middot;&middot;&middot;&middot;&middot;</div><div class="abs" style="left:57.5px;top:164.05px;width:1.5px;height:14.85px;background:#c8c8c8"></div><div class="abs ln" style="left:0;top:165.25px;width:35.9px;color:#c6c6c6">269</div><div class="abs code" style="left:57.5px;top:165.25px">                <span class="t">int32_t</span> <span class="v">b</span> <span class="p">=</span> <span class="f">stack_pop</span><span style="color:#da70d6">(</span><span class="v">stack_struct</span><span style="color:#da70d6">)</span><span class="p">;</span></div><div class="abs gitm" style="left:40.0px;top:163.55px;width:3px;height:16.05px"></div><div class="abs" style="left:57.0px;top:179.40px;width:1px;height:16.05px;background:#404040"></div><div class="abs" style="left:85.0px;top:179.40px;width:1px;height:16.05px;background:#404040"></div><div class="abs" style="left:113.0px;top:179.40px;width:1px;height:16.05px;background:#404040"></div><div class="abs" style="left:141.0px;top:179.40px;width:1px;height:16.05px;background:#404040"></div><div class="abs ln" style="left:0;top:181.10px;width:35.9px;color:#858585">270</div><div class="abs code" style="left:57.5px;top:181.10px">                <span class="t">int32_t</span> <span class="v">a</span> <span class="p">=</span> <span class="f">stack_pop</span><span style="color:#da70d6">(</span><span class="v">stack_struct</span><span style="color:#da70d6">)</span><span class="p">;</span></div><div class="abs gitm" style="left:40.0px;top:179.40px;width:3px;height:16.05px"></div><div class="abs" style="left:57.0px;top:195.25px;width:1px;height:16.05px;background:#404040"></div><div class="abs" style="left:85.0px;top:195.25px;width:1px;height:16.05px;background:#404040"></div><div class="abs" style="left:113.0px;top:195.25px;width:1px;height:16.05px;background:#404040"></div><div class="abs" style="left:141.0px;top:195.25px;width:1px;height:16.05px;background:#404040"></div><div class="abs ln" style="left:0;top:196.95px;width:35.9px;color:#858585">271</div><div class="abs code" style="left:57.5px;top:196.95px">                <span class="k">if</span> <span style="color:#da70d6">(</span><span class="v">a</span> <span class="p">&gt;</span><span class="p">=</span> <span class="v">b</span><span style="color:#da70d6">)</span> <span style="color:#da70d6">{</span></div><div class="abs gitm" style="left:40.0px;top:195.25px;width:3px;height:16.05px"></div><div class="abs" style="left:57.0px;top:211.10px;width:1px;height:16.05px;background:#404040"></div><div class="abs" style="left:85.0px;top:211.10px;width:1px;height:16.05px;background:#404040"></div><div class="abs" style="left:113.0px;top:211.10px;width:1px;height:16.05px;background:#404040"></div><div class="abs" style="left:141.0px;top:211.10px;width:1px;height:16.05px;background:#404040"></div><div class="abs" style="left:169.0px;top:211.10px;width:1px;height:16.05px;background:#404040"></div><div class="abs ln" style="left:0;top:212.80px;width:35.9px;color:#858585">272</div><div class="abs code" style="left:57.5px;top:212.80px">                    <span class="v">i</span> <span class="p">+</span><span class="p">=</span> <span style="color:#179fff">(</span><span style="color:#ffd700">(</span><span class="t">int8_t</span><span style="color:#ffd700">)</span><span style="color:#ffd700">(</span><span class="v">method</span><span class="p">-</span><span class="p">&gt;</span><span class="v">code</span><span class="p">.</span><span class="v">code</span><span style="color:#da70d6">[</span><span class="v">i</span> <span class="p">+</span> <span class="n">1</span><span style="color:#da70d6">]</span> <span class="p">&lt;</span><span class="p">&lt;</span> <span class="n">8</span><span style="color:#ffd700">)</span> <span class="p">|</span></div><div class="abs gitm" style="left:40.0px;top:211.10px;width:3px;height:16.05px"></div><div class="abs" style="left:57.0px;top:226.95px;width:1px;height:16.05px;background:#404040"></div><div class="abs" style="left:85.0px;top:226.95px;width:1px;height:16.05px;background:#404040"></div><div class="abs" style="left:113.0px;top:226.95px;width:1px;height:16.05px;background:#404040"></div><div class="abs" style="left:141.0px;top:226.95px;width:1px;height:16.05px;background:#404040"></div><div class="abs" style="left:169.0px;top:226.95px;width:1px;height:16.05px;background:#404040"></div><div class="abs ln" style="left:0;top:228.65px;width:35.9px;color:#858585">273</div><div class="abs code" style="left:57.5px;top:228.65px">                    <span style="color:#ffd700">(</span><span class="t">int16_t</span><span style="color:#ffd700">)</span> <span class="v">method</span><span class="p">-</span><span class="p">&gt;</span><span class="v">code</span><span class="p">.</span><span class="v">code</span><span style="color:#ffd700">[</span><span class="v">i</span> <span class="p">+</span> <span class="n">2</span><span style="color:#ffd700">]</span><span style="color:#179fff">)</span><span class="p">;</span></div><div class="abs gitm" style="left:40.0px;top:226.95px;width:3px;height:16.05px"></div><div class="abs" style="left:57.0px;top:242.80px;width:1px;height:16.05px;background:#404040"></div><div class="abs" style="left:85.0px;top:242.80px;width:1px;height:16.05px;background:#404040"></div><div class="abs" style="left:113.0px;top:242.80px;width:1px;height:16.05px;background:#404040"></div><div class="abs" style="left:141.0px;top:242.80px;width:1px;height:16.05px;background:#404040"></div><div class="abs ln" style="left:0;top:244.50px;width:35.9px;color:#858585">274</div><div class="abs code" style="left:57.5px;top:244.50px">                <span style="color:#da70d6">}</span></div><div class="abs gitm" style="left:40.0px;top:242.80px;width:3px;height:16.05px"></div><div class="abs" style="left:57.0px;top:258.65px;width:1px;height:16.05px;background:#404040"></div><div class="abs" style="left:85.0px;top:258.65px;width:1px;height:16.05px;background:#404040"></div><div class="abs" style="left:113.0px;top:258.65px;width:1px;height:16.05px;background:#404040"></div><div class="abs" style="left:141.0px;top:258.65px;width:1px;height:16.05px;background:#404040"></div><div class="abs ln" style="left:0;top:260.35px;width:35.9px;color:#858585">275</div><div class="abs code" style="left:57.5px;top:260.35px">                <span class="k">break</span><span class="p">;</span></div><div class="abs gitm" style="left:40.0px;top:258.65px;width:3px;height:16.05px"></div><div class="abs" style="left:57.0px;top:274.50px;width:1px;height:16.05px;background:#404040"></div><div class="abs" style="left:85.0px;top:274.50px;width:1px;height:16.05px;background:#404040"></div><div class="abs" style="left:113.0px;top:274.50px;width:1px;height:16.05px;background:#404040"></div><div class="abs ln" style="left:0;top:276.20px;width:35.9px;color:#858585">276</div><div class="abs code" style="left:57.5px;top:276.20px">            <span style="color:#ffd700">}</span> <span class="k">case</span> <span style="color:#ffd700">(</span><span class="e">i_if_icmpgt</span><span style="color:#ffd700">)</span><span class="p">:</span> <span style="color:#ffd700">{</span></div><div class="abs gitm" style="left:40.0px;top:274.50px;width:3px;height:16.05px"></div><div class="abs" style="left:57.5px;top:290.55px;width:364.0px;height:15.65px;background:#343a40"></div><div class="abs" style="left:57.0px;top:290.35px;width:1px;height:16.05px;background:#404040"></div><div class="abs" style="left:85.0px;top:290.35px;width:1px;height:16.05px;background:#404040"></div><div class="abs" style="left:113.0px;top:290.35px;width:1px;height:16.05px;background:#404040"></div><div class="abs" style="left:141.0px;top:290.35px;width:1px;height:16.05px;background:#404040"></div><div class="abs ln" style="left:0;top:292.05px;width:35.9px;color:#858585">277</div><div class="abs code" style="left:57.5px;top:292.05px">                <span class="t">int32_t</span> <span class="v">b</span> <span class="p">=</span> <span class="f">stack_pop</span><span style="color:#da70d6">(</span><span class="v">stack_struct</span><span style="color:#da70d6">)</span><span class="p">;</span></div><div class="abs gitm" style="left:40.0px;top:290.35px;width:3px;height:16.05px"></div><div class="abs" style="left:57.0px;top:306.20px;width:1px;height:16.05px;background:#404040"></div><div class="abs" style="left:85.0px;top:306.20px;width:1px;height:16.05px;background:#404040"></div><div class="abs" style="left:113.0px;top:306.20px;width:1px;height:16.05px;background:#404040"></div><div class="abs" style="left:141.0px;top:306.20px;width:1px;height:16.05px;background:#404040"></div><div class="abs ln" style="left:0;top:307.90px;width:35.9px;color:#858585">278</div><div class="abs code" style="left:57.5px;top:307.90px">                <span class="t">int32_t</span> <span class="v">a</span> <span class="p">=</span> <span class="f">stack_pop</span><span style="color:#da70d6">(</span><span class="v">stack_struct</span><span style="color:#da70d6">)</span><span class="p">;</span></div><div class="abs gitm" style="left:40.0px;top:306.20px;width:3px;height:16.05px"></div><div class="abs" style="left:57.0px;top:322.05px;width:1px;height:16.05px;background:#404040"></div><div class="abs" style="left:85.0px;top:322.05px;width:1px;height:16.05px;background:#404040"></div><div class="abs" style="left:113.0px;top:322.05px;width:1px;height:16.05px;background:#404040"></div><div class="abs" style="left:141.0px;top:322.05px;width:1px;height:16.05px;background:#404040"></div><div class="abs ln" style="left:0;top:323.75px;width:35.9px;color:#858585">279</div><div class="abs code" style="left:57.5px;top:323.75px">                <span class="k">if</span> <span style="color:#da70d6">(</span><span class="v">a</span> <span class="p">&gt;</span><span class="v">b</span><span style="color:#da70d6">)</span> <span style="color:#da70d6">{</span></div><div class="abs gitm" style="left:40.0px;top:322.05px;width:3px;height:16.05px"></div><div class="abs" style="left:57.0px;top:337.90px;width:1px;height:16.05px;background:#404040"></div><div class="abs" style="left:85.0px;top:337.90px;width:1px;height:16.05px;background:#404040"></div><div class="abs" style="left:113.0px;top:337.90px;width:1px;height:16.05px;background:#404040"></div><div class="abs" style="left:141.0px;top:337.90px;width:1px;height:16.05px;background:#404040"></div><div class="abs" style="left:169.0px;top:337.90px;width:1px;height:16.05px;background:#404040"></div><div class="abs ln" style="left:0;top:339.60px;width:35.9px;color:#858585">280</div><div class="abs code" style="left:57.5px;top:339.60px">                    <span class="v">i</span> <span class="p">+</span><span class="p">=</span> <span style="color:#179fff">(</span><span style="color:#ffd700">(</span><span class="t">int8_t</span><span style="color:#ffd700">)</span> <span style="color:#ffd700">(</span><span class="v">method</span><span class="p">-</span><span class="p">&gt;</span><span class="v">code</span><span class="p">.</span><span class="v">code</span><span style="color:#da70d6">[</span><span class="v">i</span> <span class="p">+</span> <span class="n">1</span><span style="color:#da70d6">]</span> <span class="p">&lt;</span><span class="p">&lt;</span> <span class="n">8</span><span style="color:#ffd700">)</span> <span class="p">|</span></div><div class="abs gitm" style="left:40.0px;top:337.90px;width:3px;height:16.05px"></div><div class="abs" style="left:57.0px;top:353.75px;width:1px;height:16.05px;background:#404040"></div><div class="abs" style="left:85.0px;top:353.75px;width:1px;height:16.05px;background:#404040"></div><div class="abs" style="left:113.0px;top:353.75px;width:1px;height:16.05px;background:#404040"></div><div class="abs" style="left:141.0px;top:353.75px;width:1px;height:16.05px;background:#404040"></div><div class="abs" style="left:169.0px;top:353.75px;width:1px;height:16.05px;background:#404040"></div><div class="abs ln" style="left:0;top:355.45px;width:35.9px;color:#858585">281</div><div class="abs code" style="left:57.5px;top:355.45px">                    <span style="color:#ffd700">(</span><span class="t">int16_t</span><span style="color:#ffd700">)</span> <span class="v">method</span><span class="p">-</span><span class="p">&gt;</span><span class="v">code</span><span class="p">.</span><span class="v">code</span><span style="color:#ffd700">[</span><span class="v">i</span> <span class="p">+</span> <span class="n">2</span><span style="color:#ffd700">]</span><span style="color:#179fff">)</span><span class="p">;</span></div><div class="abs gitm" style="left:40.0px;top:353.75px;width:3px;height:16.05px"></div><div class="abs" style="left:57.0px;top:369.60px;width:1px;height:16.05px;background:#404040"></div><div class="abs" style="left:85.0px;top:369.60px;width:1px;height:16.05px;background:#404040"></div><div class="abs" style="left:113.0px;top:369.60px;width:1px;height:16.05px;background:#404040"></div><div class="abs" style="left:141.0px;top:369.60px;width:1px;height:16.05px;background:#404040"></div><div class="abs ln" style="left:0;top:371.30px;width:35.9px;color:#858585">282</div><div class="abs code" style="left:57.5px;top:371.30px">                <span style="color:#da70d6">}</span></div><div class="abs gitm" style="left:40.0px;top:369.60px;width:3px;height:16.05px"></div><div class="abs" style="left:57.0px;top:385.45px;width:1px;height:16.05px;background:#404040"></div><div class="abs" style="left:85.0px;top:385.45px;width:1px;height:16.05px;background:#404040"></div><div class="abs" style="left:113.0px;top:385.45px;width:1px;height:16.05px;background:#404040"></div><div class="abs" style="left:141.0px;top:385.45px;width:1px;height:16.05px;background:#404040"></div><div class="abs ln" style="left:0;top:387.15px;width:35.9px;color:#858585">283</div><div class="abs code" style="left:57.5px;top:387.15px">                <span class="k">break</span><span class="p">;</span></div><div class="abs gitm" style="left:40.0px;top:385.45px;width:3px;height:16.05px"></div><div class="abs" style="left:57.0px;top:401.30px;width:1px;height:16.05px;background:#404040"></div><div class="abs" style="left:85.0px;top:401.30px;width:1px;height:16.05px;background:#404040"></div><div class="abs" style="left:113.0px;top:401.30px;width:1px;height:16.05px;background:#404040"></div><div class="abs ln" style="left:0;top:403.00px;width:35.9px;color:#858585">284</div><div class="abs code" style="left:57.5px;top:403.00px">            <span style="color:#ffd700">}</span> <span class="k">case</span> <span style="color:#ffd700">(</span><span class="e">i_if_icmple</span><span style="color:#ffd700">)</span><span class="p">:</span> <span style="color:#ffd700">{</span></div><div class="abs gitm" style="left:40.0px;top:401.30px;width:3px;height:16.05px"></div><div class="abs" style="left:57.5px;top:417.35px;width:364.0px;height:15.65px;background:#343a40"></div><div class="abs" style="left:57.0px;top:417.15px;width:1px;height:16.05px;background:#404040"></div><div class="abs" style="left:85.0px;top:417.15px;width:1px;height:16.05px;background:#404040"></div><div class="abs" style="left:113.0px;top:417.15px;width:1px;height:16.05px;background:#404040"></div><div class="abs" style="left:141.0px;top:417.15px;width:1px;height:16.05px;background:#404040"></div><div class="abs ln" style="left:0;top:418.85px;width:35.9px;color:#858585">285</div><div class="abs code" style="left:57.5px;top:418.85px">                <span class="t">int32_t</span> <span class="v">b</span> <span class="p">=</span> <span class="f">stack_pop</span><span style="color:#da70d6">(</span><span class="v">stack_struct</span><span style="color:#da70d6">)</span><span class="p">;</span></div><div class="abs gitm" style="left:40.0px;top:417.15px;width:3px;height:16.05px"></div><div class="abs" style="left:57.0px;top:433.00px;width:1px;height:16.05px;background:#404040"></div><div class="abs" style="left:85.0px;top:433.00px;width:1px;height:16.05px;background:#404040"></div><div class="abs" style="left:113.0px;top:433.00px;width:1px;height:16.05px;background:#404040"></div><div class="abs" style="left:141.0px;top:433.00px;width:1px;height:16.05px;background:#404040"></div><div class="abs ln" style="left:0;top:434.70px;width:35.9px;color:#858585">286</div><div class="abs code" style="left:57.5px;top:434.70px">                <span class="t">int32_t</span> <span class="v">a</span> <span class="p">=</span> <span class="f">stack_pop</span><span style="color:#da70d6">(</span><span class="v">stack_struct</span><span style="color:#da70d6">)</span><span class="p">;</span></div><div class="abs gitm" style="left:40.0px;top:433.00px;width:3px;height:16.05px"></div><div class="abs" style="left:57.0px;top:448.85px;width:1px;height:16.05px;background:#404040"></div><div class="abs" style="left:85.0px;top:448.85px;width:1px;height:16.05px;background:#404040"></div><div class="abs" style="left:113.0px;top:448.85px;width:1px;height:16.05px;background:#404040"></div><div class="abs" style="left:141.0px;top:448.85px;width:1px;height:16.05px;background:#404040"></div><div class="abs ln" style="left:0;top:450.55px;width:35.9px;color:#858585">287</div><div class="abs code" style="left:57.5px;top:450.55px">                <span class="k">if</span> <span style="color:#da70d6">(</span><span class="v">a</span> <span class="p">&lt;</span><span class="p">=</span> <span class="v">b</span><span style="color:#da70d6">)</span> <span style="color:#da70d6">{</span></div><div class="abs gitm" style="left:40.0px;top:448.85px;width:3px;height:16.05px"></div><div class="abs" style="left:57.0px;top:464.70px;width:1px;height:16.05px;background:#404040"></div><div class="abs" style="left:85.0px;top:464.70px;width:1px;height:16.05px;background:#404040"></div><div class="abs" style="left:113.0px;top:464.70px;width:1px;height:16.05px;background:#404040"></div><div class="abs" style="left:141.0px;top:464.70px;width:1px;height:16.05px;background:#404040"></div><div class="abs" style="left:169.0px;top:464.70px;width:1px;height:16.05px;background:#404040"></div><div class="abs ln" style="left:0;top:466.40px;width:35.9px;color:#858585">288</div><div class="abs code" style="left:57.5px;top:466.40px">                    <span class="v">i</span> <span class="p">+</span><span class="p">=</span> <span style="color:#179fff">(</span><span style="color:#ffd700">(</span><span class="t">int8_t</span><span style="color:#ffd700">)</span> <span style="color:#ffd700">(</span><span class="v">method</span><span class="p">-</span><span class="p">&gt;</span><span class="v">code</span><span class="p">.</span><span class="v">code</span><span style="color:#da70d6">[</span><span class="v">i</span> <span class="p">+</span> <span class="n">1</span><span style="color:#da70d6">]</span> <span class="p">&lt;</span><span class="p">&lt;</span> <span class="n">8</span><span style="color:#ffd700">)</span> <span class="p">|</span></div><div class="abs gitm" style="left:40.0px;top:464.70px;width:3px;height:16.05px"></div><div class="abs" style="left:57.0px;top:480.55px;width:1px;height:16.05px;background:#404040"></div><div class="abs" style="left:85.0px;top:480.55px;width:1px;height:16.05px;background:#404040"></div><div class="abs" style="left:113.0px;top:480.55px;width:1px;height:16.05px;background:#404040"></div><div class="abs" style="left:141.0px;top:480.55px;width:1px;height:16.05px;background:#404040"></div><div class="abs" style="left:169.0px;top:480.55px;width:1px;height:16.05px;background:#404040"></div><div class="abs ln" style="left:0;top:482.25px;width:35.9px;color:#858585">289</div><div class="abs code" style="left:57.5px;top:482.25px">                    <span style="color:#ffd700">(</span><span class="t">int16_t</span><span style="color:#ffd700">)</span> <span class="v">method</span><span class="p">-</span><span class="p">&gt;</span><span class="v">code</span><span class="p">.</span><span class="v">code</span><span style="color:#ffd700">[</span><span class="v">i</span> <span class="p">+</span> <span class="n">2</span><span style="color:#ffd700">]</span><span style="color:#179fff">)</span><span class="p">;</span></div><div class="abs gitm" style="left:40.0px;top:480.55px;width:3px;height:16.05px"></div><div class="abs" style="left:57.0px;top:496.40px;width:1px;height:16.05px;background:#404040"></div><div class="abs" style="left:85.0px;top:496.40px;width:1px;height:16.05px;background:#404040"></div><div class="abs" style="left:113.0px;top:496.40px;width:1px;height:16.05px;background:#404040"></div><div class="abs" style="left:141.0px;top:496.40px;width:1px;height:16.05px;background:#404040"></div><div class="abs ln" style="left:0;top:498.10px;width:35.9px;color:#858585">290</div><div class="abs code" style="left:57.5px;top:498.10px">                <span style="color:#da70d6">}</span></div><div class="abs gitm" style="left:40.0px;top:496.40px;width:3px;height:16.05px"></div><div class="abs" style="left:57.0px;top:512.25px;width:1px;height:16.05px;background:#404040"></div><div class="abs" style="left:85.0px;top:512.25px;width:1px;height:16.05px;background:#404040"></div><div class="abs" style="left:113.0px;top:512.25px;width:1px;height:16.05px;background:#404040"></div><div class="abs" style="left:141.0px;top:512.25px;width:1px;height:16.05px;background:#404040"></div><div class="abs ln" style="left:0;top:513.95px;width:35.9px;color:#858585">291</div><div class="abs code" style="left:57.5px;top:513.95px">                <span class="k">break</span><span class="p">;</span></div><div class="abs gitm" style="left:40.0px;top:512.25px;width:3px;height:16.05px"></div><div class="abs" style="left:572px;top:225.5px;width:2px;height:199.5px;background:#1b81a8"></div><div class="abs" style="left:578px;top:369.0px;width:4px;height:1.5px;background:#1b81a8"></div><div class="abs" style="left:578px;top:439.0px;width:4px;height:1.5px;background:#1b81a8"></div><div class="abs" style="left:0;top:0;width:570px;height:4px;background:linear-gradient(#000000a0,#00000000)"></div></div><div class="abs" style="left:0;top:567px;width:931px;height:433px;background:#1e1e1e;border-top:1px solid #474747;box-sizing:border-box;overflow:hidden"><div class="abs ptab" style="left:18.1px;top:8.8px;color:#a3a3a3;transform:scaleX(0.840);transform-origin:0 0">PROBLEMS</div><div class="abs ptab" style="left:82.5px;top:8.8px;color:#a3a3a3;transform:scaleX(0.853);transform-origin:0 0">OUTPUT</div><div class="abs ptab" style="left:136.9px;top:8.8px;color:#e7e7e7;transform:scaleX(0.871);transform-origin:0 0">TERMINAL</div><div class="abs ptab" style="left:199.3px;top:8.8px;color:#a3a3a3;transform:scaleX(0.825);transform-origin:0 0">PORTS</div><div class="abs" style="left:136px;top:24.8px;width:45px;height:1px;background:#e7e7e7"></div><svg class="abs" style="left:851px;top:9px" width="13" height="12" viewBox="0 0 13 12"><rect x="0.5" y="0.5" width="12" height="11" rx="1.5" fill="none" stroke="#c5c5c5" stroke-width="1"/><path d="M4 3L7 6L4 9" fill="none" stroke="#c5c5c5" stroke-width="1"/></svg><div class="abs bash" style="left:867.3px;top:10px;transform:scaleX(0.905);transform-origin:0 0">bash</div><svg class="abs" style="left:895px;top:9px" width="12" height="12" viewBox="0 0 12 12"><path d="M6 0.5V11.5M0.5 6H11.5" stroke="#c5c5c5" stroke-width="1"/></svg><svg class="abs" style="left:911px;top:12px" width="8" height="5" viewBox="0 0 8 5"><path d="M1 0.8L4 3.8L7 0.8" fill="none" stroke="#c5c5c5" stroke-width="1"/></svg><div class="abs" style="left:929px;top:9.5px;width:8px;height:11px;border:1px solid #c5c5c5;border-radius:1.5px;box-sizing:border-box"></div><div class="abs term" style="left:18px;top:43.00px"><span style="color:#cccccc">SUMMARY: UndefinedBehaviorSanitizer: undefined-behavior heap.c:32:19 in</span></div><div class="abs term" style="left:18px;top:58.00px"><span style="color:#cccccc">=================================================================</span></div><div class="abs term" style="left:18px;top:73.00px"><span style="color:#f14c4c;font-weight:bold">==3984492==ERROR: AddressSanitizer: heap-buffer-overflow on address 0x60200000036c at pc 0x0000004d10a1 bp 0x7ffdad573c80 sp 0x7ffdad573c78</span></div><div class="abs term" style="left:18px;top:88.00px"><span style="color:#3b8eea;font-weight:bold">READ of size 4 at 0x60200000036c thread T0</span></div><div class="abs term" style="left:18px;top:103.00px"><span style="color:#cccccc">    #0 0x4d10a0 in stack_pop /home/sulekha/cs24/project01-sulekha/heap.c:32:19</span></div><div class="abs term" style="left:18px;top:118.00px"><span style="color:#cccccc">    #1 0x4c882d in execute /home/sulekha/cs24/project01-sulekha/jvm.c:269:29</span></div><div class="abs term" style="left:18px;top:133.00px"><span style="color:#cccccc">    #2 0x4ca2d2 in main /home/sulekha/cs24/project01-sulekha/jvm.c:330:31</span></div><div class="abs term" style="left:18px;top:148.00px"><span style="color:#cccccc">    #3 0x7fa6071600b2 in __libc_start_main /build/glibc-sMfBJT/glibc-2.31/csu/../csu/libc-start.c:308:16</span></div><div class="abs term" style="left:18px;top:163.00px"><span style="color:#cccccc">    #4 0x41b31d in _start (/home/sulekha/cs24/project01-sulekha/jvm+0x41b31d)</span></div><div class="abs term" style="left:18px;top:178.00px"></div><div class="abs term" style="left:18px;top:193.00px"><span style="color:#23d18b;font-weight:bold">0x60200000036c is located 4 bytes to the left of 8-byte region [0x602000000370,0x602000000378)</span></div><div class="abs term" style="left:18px;top:208.00px"><span style="color:#d670d6;font-weight:bold">allocated by thread T0 here:</span></div><div class="abs term" style="left:18px;top:223.00px"><span style="color:#cccccc">    #0 0x493a5d in malloc (/home/sulekha/cs24/project01-sulekha/jvm+0x493a5d)</span></div><div class="abs term" style="left:18px;top:238.00px"><span style="color:#cccccc">    #1 0x4d09a9 in stack_init /home/sulekha/cs24/project01-sulekha/heap.c:21:27</span></div><div class="abs term" style="left:18px;top:253.00px"><span style="color:#cccccc">    #2 0x4c33e8 in execute /home/sulekha/cs24/project01-sulekha/jvm.c:51:29</span></div><div class="abs term" style="left:18px;top:268.00px"><span style="color:#cccccc">    #3 0x4ca2d2 in main /home/sulekha/cs24/project01-sulekha/jvm.c:330:31</span></div><div class="abs term" style="left:18px;top:283.00px"><span style="color:#cccccc">    #4 0x7fa6071600b2 in __libc_start_main /build/glibc-sMfBJT/glibc-2.31/csu/../csu/libc-start.c:308:16</span></div><div class="abs term" style="left:18px;top:298.00px"></div><div class="abs term" style="left:18px;top:313.00px"><span style="color:#cccccc">SUMMARY: AddressSanitizer: heap-buffer-overflow /home/sulekha/cs24/project01-sulekha/heap.c:32:19 in stack_pop</span></div><div class="abs term" style="left:18px;top:328.00px"><span style="color:#cccccc">Shadow bytes around the buggy address:</span></div><div class="abs term" style="left:18px;top:343.00px"><span style="color:#cccccc">  0x0c047fff8010: </span><span style="color:#f14c4c;font-weight:bold">fa</span><span style="color:#cccccc"> </span><span style="color:#f14c4c;font-weight:bold">fa</span><span style="color:#cccccc"> </span><span style="color:#cccccc">04</span><span style="color:#cccccc"> </span><span style="color:#f14c4c;font-weight:bold">fa</span><span style="color:#cccccc"> </span><span style="color:#f14c4c;font-weight:bold">fa</span><span style="color:#cccccc"> </span><span style="color:#f14c4c;font-weight:bold">fa</span><span style="color:#cccccc"> </span><span style="color:#cccccc">02</span><span style="color:#cccccc"> </span><span style="color:#f14c4c;font-weight:bold">fa</span><span style="color:#cccccc"> </span><span style="color:#f14c4c;font-weight:bold">fa</span><span style="color:#cccccc"> </span><span style="color:#f14c4c;font-weight:bold">fa</span><span style="color:#cccccc"> </span><span style="color:#cccccc">02</span><span style="color:#cccccc"> </span><span style="color:#f14c4c;font-weight:bold">fa</span><span style="color:#cccccc"> </span><span style="color:#f14c4c;font-weight:bold">fa</span><span style="color:#cccccc"> </span><span style="color:#f14c4c;font-weight:bold">fa</span><span style="color:#cccccc"> </span><span style="color:#cccccc">07</span><span style="color:#cccccc"> </span><span style="color:#f14c4c;font-weight:bold">fa</span></div><div class="abs term" style="left:18px;top:358.00px"><span style="color:#cccccc">  0x0c047fff8020: </span><span style="color:#f14c4c;font-weight:bold">fa</span><span style="color:#cccccc"> </span><span style="color:#f14c4c;font-weight:bold">fa</span><span style="color:#cccccc"> </span><span style="color:#cccccc">04</span><span style="color:#cccccc"> </span><span style="color:#f14c4c;font-weight:bold">fa</span><span style="color:#cccccc"> </span><span style="color:#f14c4c;font-weight:bold">fa</span><span style="color:#cccccc"> </span><span style="color:#f14c4c;font-weight:bold">fa</span><span style="color:#cccccc"> </span><span style="color:#cccccc">05</span><span style="color:#cccccc"> </span><span style="color:#f14c4c;font-weight:bold">fa</span><span style="color:#cccccc"> </span><span style="color:#f14c4c;font-weight:bold">fa</span><span style="color:#cccccc"> </span><span style="color:#f14c4c;font-weight:bold">fa</span><span style="color:#cccccc"> </span><span style="color:#cccccc">00</span><span style="color:#cccccc"> </span><span style="color:#cccccc">00</span><span style="color:#cccccc"> </span><span style="color:#f14c4c;font-weight:bold">fa</span><span style="color:#cccccc"> </span><span style="color:#f14c4c;font-weight:bold">fa</span><span style="color:#cccccc"> </span><span style="color:#cccccc">05</span><span style="color:#cccccc"> </span><span style="color:#f14c4c;font-weight:bold">fa</span></div><div class="abs term" style="left:18px;top:373.00px"><span style="color:#cccccc">  0x0c047fff8030: </span><span style="color:#f14c4c;font-weight:bold">fa</span><span style="color:#cccccc"> </span><span style="color:#f14c4c;font-weight:bold">fa</span><span style="color:#cccccc"> </span><span style="color:#cccccc">00</span><span style="color:#cccccc"> </span><span style="color:#cccccc">06</span><span style="color:#cccccc"> </span><span style="color:#f14c4c;font-weight:bold">fa</span><span style="color:#cccccc"> </span><span style="color:#f14c4c;font-weight:bold">fa</span><span style="color:#cccccc"> </span><span style="color:#cccccc">00</span><span style="color:#cccccc"> </span><span style="color:#cccccc">03</span><span style="color:#cccccc"> </span><span style="color:#f14c4c;font-weight:bold">fa</span><span style="color:#cccccc"> </span><span style="color:#f14c4c;font-weight:bold">fa</span><span style="color:#cccccc"> </span><span style="color:#cccccc">00</span><span style="color:#cccccc"> </span><span style="color:#cccccc">05</span><span style="color:#cccccc"> </span><span style="color:#f14c4c;font-weight:bold">fa</span><span style="color:#cccccc"> </span><span style="color:#f14c4c;font-weight:bold">fa</span><span style="color:#cccccc"> </span><span style="color:#cccccc">04</span><span style="color:#cccccc"> </span><span style="color:#f14c4c;font-weight:bold">fa</span></div><div class="abs term" style="left:18px;top:388.00px"><span style="color:#cccccc">  0x0c047fff8040: </span><span style="color:#f14c4c;font-weight:bold">fa</span><span style="color:#cccccc"> </span><span style="color:#f14c4c;font-weight:bold">fa</span><span style="color:#cccccc"> </span><span style="color:#cccccc">02</span><span style="color:#cccccc"> </span><span style="color:#f14c4c;font-weight:bold">fa</span><span style="color:#cccccc"> </span><span style="color:#f14c4c;font-weight:bold">fa</span><span style="color:#cccccc"> </span><span style="color:#f14c4c;font-weight:bold">fa</span><span style="color:#cccccc"> </span><span style="color:#cccccc">04</span><span style="color:#cccccc"> </span><span style="color:#f14c4c;font-weight:bold">fa</span><span style="color:#cccccc"> </span><span style="color:#f14c4c;font-weight:bold">fa</span><span style="color:#cccccc"> </span><span style="color:#f14c4c;font-weight:bold">fa</span><span style="color:#cccccc"> </span><span style="color:#cccccc">02</span><span style="color:#cccccc"> </span><span style="color:#f14c4c;font-weight:bold">fa</span><span style="color:#cccccc"> </span><span style="color:#f14c4c;font-weight:bold">fa</span><span style="color:#cccccc"> </span><span style="color:#f14c4c;font-weight:bold">fa</span><span style="color:#cccccc"> </span><span style="color:#cccccc">04</span><span style="color:#cccccc"> </span><span style="color:#f14c4c;font-weight:bold">fa</span></div><div class="abs term" style="left:18px;top:403.00px"><span style="color:#cccccc">  0x0c047fff8050: </span><span style="color:#f14c4c;font-weight:bold">fa</span><span style="color:#cccccc"> </span><span style="color:#f14c4c;font-weight:bold">fa</span><span style="color:#cccccc"> </span><span style="color:#cccccc">00</span><span style="color:#cccccc"> </span><span style="color:#f14c4c;font-weight:bold">fa</span><span style="color:#cccccc"> </span><span style="color:#f14c4c;font-weight:bold">fa</span><span style="color:#cccccc"> </span><span style="color:#f14c4c;font-weight:bold">fa</span><span style="color:#cccccc"> </span><span style="color:#cccccc">04</span><span style="color:#cccccc"> </span><span style="color:#f14c4c;font-weight:bold">fa</span><span style="color:#cccccc"> </span><span style="color:#f14c4c;font-weight:bold">fa</span><span style="color:#cccccc"> </span><span style="color:#f14c4c;font-weight:bold">fa</span><span style="color:#cccccc"> </span><span style="color:#cccccc">00</span><span style="color:#cccccc"> </span><span style="color:#f14c4c;font-weight:bold">fa</span><span style="color:#cccccc"> </span><span style="color:#f14c4c;font-weight:bold">fa</span><span style="color:#cccccc"> </span><span style="color:#f14c4c;font-weight:bold">fa</span><span style="color:#cccccc"> </span><span style="color:#cccccc">05</span><span style="color:#cccccc"> </span><span style="color:#f14c4c;font-weight:bold">fa</span></div><div class="abs term" style="left:18px;top:418.00px"><span style="color:#cccccc">=&gt;0x0c047fff8060: </span><span style="color:#f14c4c;font-weight:bold">fa</span><span style="color:#cccccc"> </span><span style="color:#f14c4c;font-weight:bold">fa</span><span style="color:#cccccc"> 05 </span><span style="color:#f14c4c;font-weight:bold">fa</span><span style="color:#cccccc"> </span><span style="color:#f14c4c;font-weight:bold">fa</span><span style="color:#cccccc"> </span><span style="color:#f14c4c;font-weight:bold">fa</span><span style="color:#cccccc"> 00 00 </span><span style="color:#f14c4c;font-weight:bold">fa</span><span style="color:#cccccc"> </span><span style="color:#f14c4c;font-weight:bold">fa</span><span style="color:#cccccc"> 00 00 </span><span style="color:#f14c4c;font-weight:bold">fa</span><span style="color:#cccccc">[</span><span style="color:#f14c4c;font-weight:bold">fa</span><span style="color:#cccccc">]00 </span><span style="color:#f14c4c;font-weight:bold">fa</span></div><div class="abs term" style="left:18px;top:433.00px"><span style="color:#cccccc">  0x0c047fff8070: fa fa fa fa fa fa fa fa fa fa fa fa fa fa fa fa</span></div></div><div class="abs" style="left:0;top:1001px;width:931px;height:5px;background:#007acc;overflow:hidden"><svg class="abs" style="left:0;top:0" width="200" height="6" viewBox="0 1001 200 6"><circle cx="53.6" cy="1008.6" r="3.6" fill="none" stroke="#ffffff" stroke-width="1.1"/><circle cx="78.5" cy="1009" r="4.4" fill="none" stroke="#ffffff" stroke-width="1.1"/><path d="M95.5 1012L101 1003.6L106.5 1012" fill="none" stroke="#ffffff" stroke-width="1.1"/><circle cx="131.5" cy="1006.8" r="2.3" fill="none" stroke="#ffffff" stroke-width="1.1"/><circle cx="138.3" cy="1006.8" r="2.3" fill="none" stroke="#ffffff" stroke-width="1.1"/><path d="M164.5 1006.5L168.4 1003.8L172.5 1006.5" fill="none" stroke="#ffffff" stroke-width="1.2"/></svg></div></body></html>
